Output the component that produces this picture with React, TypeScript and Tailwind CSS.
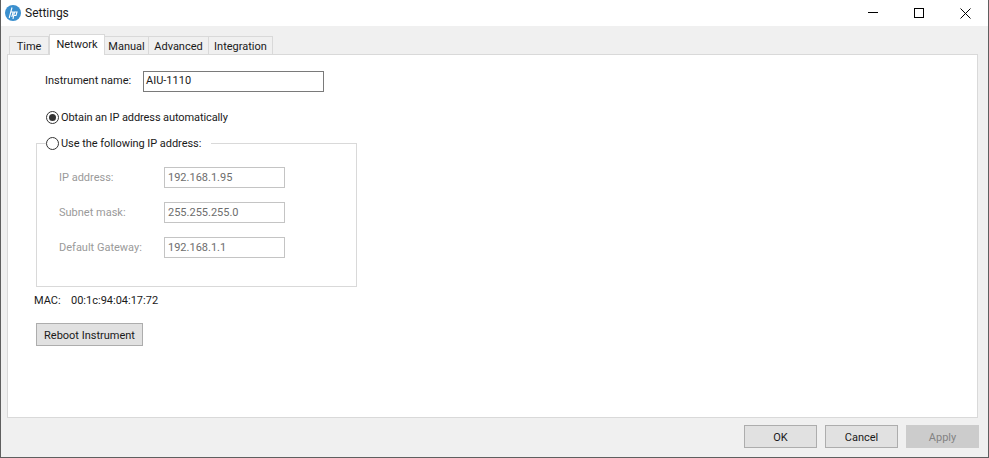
const tabs = [
  { label: "Time", w: "w-[40px]" },
  { label: "Network", w: "w-[56px]", active: true },
  { label: "Manual", w: "w-[44px]" },
  { label: "Advanced", w: "w-[60px]" },
  { label: "Integration", w: "w-[64px]" },
];

const ipRows = [
  { label: "IP address:", value: "192.168.1.95" },
  { label: "Subnet mask:", value: "255.255.255.0" },
  { label: "Default Gateway:", value: "192.168.1.1" },
];

function Radio({ checked }: { checked?: boolean }) {
  return (
    <span className="flex h-[13px] w-[13px] shrink-0 items-center justify-center rounded-full border border-[#333] bg-white">
      {checked && <span className="h-[7px] w-[7px] rounded-full bg-[#333]" />}
    </span>
  );
}

function HpLogo() {
  return (
    <svg width="16" height="16" viewBox="0 0 16 16" className="shrink-0">
      <circle cx="8" cy="8" r="8" fill="#3a8fce" />
      <path d="M7 2.5 L4.2 13 M5.6 7 L8.2 7 L6.8 12 M9.6 6.5 L8 14 M9.6 7 L12 7 L11 10.5 L9 10.5" stroke="#fff" strokeWidth="1.1" fill="none" />
    </svg>
  );
}

function WindowControls() {
  return (
    <div className="ml-auto flex h-full items-center">
      <div className="flex w-[46px] justify-center">
        <svg width="10" height="10" viewBox="0 0 10 10" shapeRendering="crispEdges">
          <path d="M0 4.5H10" stroke="#000" fill="none" />
        </svg>
      </div>
      <div className="flex w-[46px] justify-center">
        <svg width="10" height="10" viewBox="0 0 10 10" shapeRendering="crispEdges">
          <rect x="0.5" y="0.5" width="9" height="9" stroke="#000" fill="none" />
        </svg>
      </div>
      <div className="flex w-[46px] justify-center">
        <svg width="11" height="11" viewBox="0 0 11 11">
          <path d="M0.5 0.5L10.5 10.5M10.5 0.5L0.5 10.5" stroke="#000" fill="none" />
        </svg>
      </div>
    </div>
  );
}

function FooterButton({ label, disabled }: { label: string; disabled?: boolean }) {
  return (
    <div
      className={
        disabled
          ? "flex h-[23px] w-[73px] items-center justify-center border border-[#cccccc] bg-[#cccccc] pt-[3px] text-[#838383]"
          : "flex h-[23px] w-[73px] items-center justify-center border border-[#adadad] bg-[#e1e1e1] pt-[3px]"
      }
    >
      {label}
    </div>
  );
}

export default function App() {
  return (
    <div className="flex h-[458px] w-[989px] flex-col overflow-hidden border border-t-0 border-[#5f5f5f] bg-[#f0f0f0] font-['Roboto',sans-serif] text-[11px] text-[#1a1a1a]">
      <div className="flex h-[26px] shrink-0 items-center bg-white pl-[4px]">
        <HpLogo />
        <span className="ml-[4px] text-[12px]">Settings</span>
        <WindowControls />
      </div>

      <div className="flex h-[28px] shrink-0 items-end pl-[8px]">
        {tabs.map((t) =>
          t.active ? (
            <div
              key={t.label}
              className={`relative z-10 -mb-px flex h-[21px] items-center justify-center border border-b-0 border-[#d9d9d9] bg-white ${t.w}`}
            >
              {t.label}
            </div>
          ) : (
            <div
              key={t.label}
              className={`flex h-[18px] items-center justify-center border border-l-0 border-b-0 border-[#d9d9d9] bg-[#f0f0f0] pt-[3px] first:border-l ${t.w}`}
            >
              {t.label}
            </div>
          )
        )}
      </div>

      <div className="ml-[6px] mr-[10px] h-[364px] shrink-0 border border-[#d9d9d9] bg-white pl-[28px]">
        <div className="mt-[16px] flex h-[21px] items-center pl-[9px]">
          <span className="w-[98px]">Instrument name:</span>
          <div className="flex h-[21px] w-[181px] items-center border border-[#7a7a7a] pl-[2px]">AIU-1110</div>
        </div>

        <div className="mt-[17px] flex h-[16px] items-center gap-[2px] pl-[10px]">
          <Radio checked />
          <span className="pt-[2px] tracking-[-0.1px]">Obtain an IP address automatically</span>
        </div>

        <fieldset className="mt-[10px] h-[152px] w-[321px] border border-[#d9d9d9]">
          <legend className="ml-[9px] flex h-[16px] items-center gap-[2px] pr-[10px]">
            <Radio />
            <span className="pt-[2px] tracking-[-0.05px]">Use the following IP address:</span>
          </legend>
          <div className="mt-[16px] flex flex-col gap-[14px] pl-[22px] text-[#9a9a9a]">
            {ipRows.map((r) => (
              <div key={r.label} className="flex h-[21px] items-center">
                <span className="w-[105px] pt-[2px]">{r.label}</span>
                <div className="flex h-[21px] w-[121px] items-center border border-[#c4c4c4] pl-[3px] pt-[1px] text-[#6d6d6d]">
                  {r.value}
                </div>
              </div>
            ))}
          </div>
        </fieldset>

        <div className="-ml-[2px] mt-[5px] flex h-[16px] items-center pt-[2px]">
          <span className="w-[37px]">MAC:</span>
          <span>00:1c:94:04:17:72</span>
        </div>

        <div className="mt-[15px] flex h-[23px] w-[107px] items-center justify-center border border-[#adadad] bg-[#e1e1e1] pt-[3px]">
          Reboot Instrument
        </div>
      </div>

      <div className="flex flex-1 items-start justify-end gap-[8px] pr-[9px] pt-[7px]">
        <FooterButton label="OK" />
        <FooterButton label="Cancel" />
        <FooterButton label="Apply" disabled />
      </div>
    </div>
  );
}
